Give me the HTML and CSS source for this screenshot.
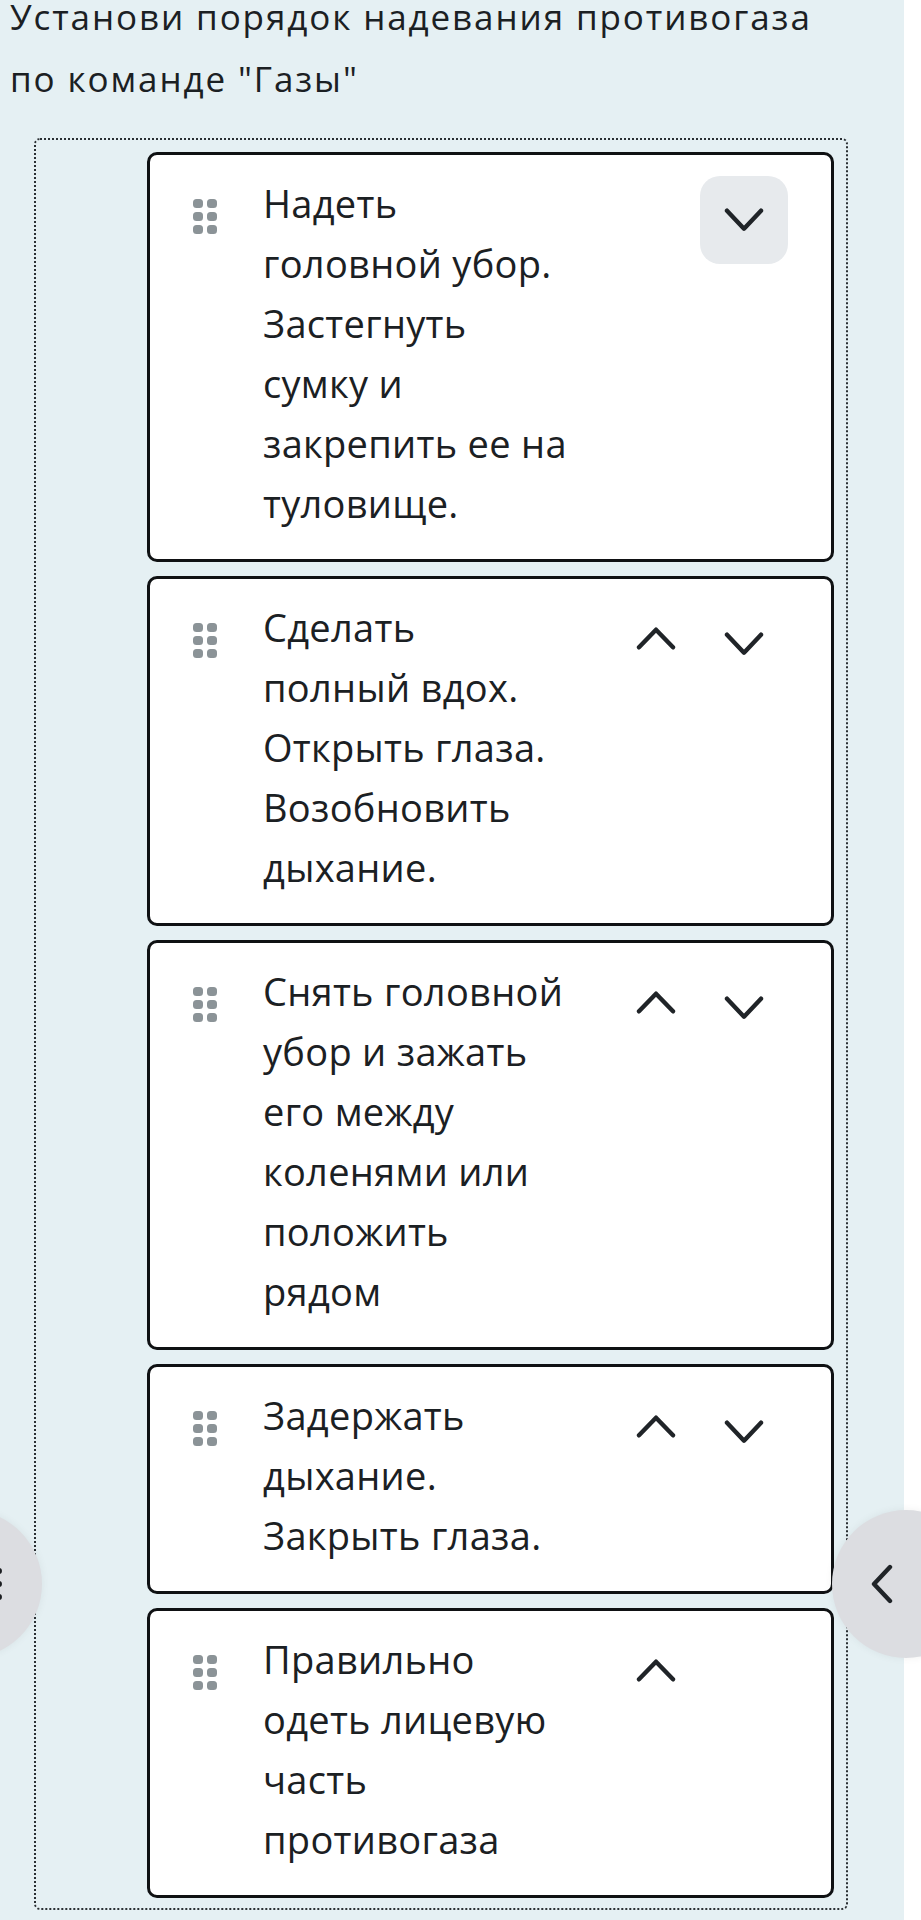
FILE: index.html
```html
<!DOCTYPE html>
<html lang="ru">
<head>
    <meta charset="UTF-8">
    <meta name="viewport" content="width=device-width, initial-scale=1.0">
    <title>Порядок надевания противогаза</title>
    <link rel="stylesheet" href="styles.css">
</head>
<body>
    <main class="screen">
        <h1 class="task-title">Установи порядок надевания противогаза по команде "Газы"</h1>

        <!-- список для сортировки -->
        <div class="sort-list">
            <div class="sort-item">
                <svg class="grip" viewBox="0 0 24 35"><rect x="0" y="0" width="10" height="9" rx="3.5"/><rect x="14" y="0" width="10" height="9" rx="3.5"/><rect x="0" y="13" width="10" height="9" rx="3.5"/><rect x="14" y="13" width="10" height="9" rx="3.5"/><rect x="0" y="26" width="10" height="9" rx="3.5"/><rect x="14" y="26" width="10" height="9" rx="3.5"/></svg>
                <p class="item-text">Надеть<br>головной убор.<br>Застегнуть<br>сумку и<br>закрепить ее на<br>туловище.</p>
                <div class="item-controls">
                    <button class="move-btn is-hidden"><svg viewBox="0 0 40 40"><path d="M3 23.3 L20 5.7 L37 23.3"/></svg></button>
                    <button class="move-btn is-active"><svg viewBox="0 0 40 40"><path d="M3 10.7 L20 28.7 L37 10.7"/></svg></button>
                </div>
            </div>

            <div class="sort-item">
                <svg class="grip" viewBox="0 0 24 35"><rect x="0" y="0" width="10" height="9" rx="3.5"/><rect x="14" y="0" width="10" height="9" rx="3.5"/><rect x="0" y="13" width="10" height="9" rx="3.5"/><rect x="14" y="13" width="10" height="9" rx="3.5"/><rect x="0" y="26" width="10" height="9" rx="3.5"/><rect x="14" y="26" width="10" height="9" rx="3.5"/></svg>
                <p class="item-text">Сделать<br>полный вдох.<br>Открыть глаза.<br>Возобновить<br>дыхание.</p>
                <div class="item-controls">
                    <button class="move-btn"><svg viewBox="0 0 40 40"><path d="M3 23.3 L20 5.7 L37 23.3"/></svg></button>
                    <button class="move-btn"><svg viewBox="0 0 40 40"><path d="M3 10.7 L20 28.7 L37 10.7"/></svg></button>
                </div>
            </div>

            <div class="sort-item">
                <svg class="grip" viewBox="0 0 24 35"><rect x="0" y="0" width="10" height="9" rx="3.5"/><rect x="14" y="0" width="10" height="9" rx="3.5"/><rect x="0" y="13" width="10" height="9" rx="3.5"/><rect x="14" y="13" width="10" height="9" rx="3.5"/><rect x="0" y="26" width="10" height="9" rx="3.5"/><rect x="14" y="26" width="10" height="9" rx="3.5"/></svg>
                <p class="item-text">Снять головной<br>убор и зажать<br>его между<br>коленями или<br>положить<br>рядом</p>
                <div class="item-controls">
                    <button class="move-btn"><svg viewBox="0 0 40 40"><path d="M3 23.3 L20 5.7 L37 23.3"/></svg></button>
                    <button class="move-btn"><svg viewBox="0 0 40 40"><path d="M3 10.7 L20 28.7 L37 10.7"/></svg></button>
                </div>
            </div>

            <div class="sort-item">
                <svg class="grip" viewBox="0 0 24 35"><rect x="0" y="0" width="10" height="9" rx="3.5"/><rect x="14" y="0" width="10" height="9" rx="3.5"/><rect x="0" y="13" width="10" height="9" rx="3.5"/><rect x="14" y="13" width="10" height="9" rx="3.5"/><rect x="0" y="26" width="10" height="9" rx="3.5"/><rect x="14" y="26" width="10" height="9" rx="3.5"/></svg>
                <p class="item-text">Задержать<br>дыхание.<br>Закрыть глаза.</p>
                <div class="item-controls">
                    <button class="move-btn"><svg viewBox="0 0 40 40"><path d="M3 23.3 L20 5.7 L37 23.3"/></svg></button>
                    <button class="move-btn"><svg viewBox="0 0 40 40"><path d="M3 10.7 L20 28.7 L37 10.7"/></svg></button>
                </div>
            </div>

            <div class="sort-item">
                <svg class="grip" viewBox="0 0 24 35"><rect x="0" y="0" width="10" height="9" rx="3.5"/><rect x="14" y="0" width="10" height="9" rx="3.5"/><rect x="0" y="13" width="10" height="9" rx="3.5"/><rect x="14" y="13" width="10" height="9" rx="3.5"/><rect x="0" y="26" width="10" height="9" rx="3.5"/><rect x="14" y="26" width="10" height="9" rx="3.5"/></svg>
                <p class="item-text">Правильно<br>одеть лицевую<br>часть<br>противогаза</p>
                <div class="item-controls">
                    <button class="move-btn"><svg viewBox="0 0 40 40"><path d="M3 23.3 L20 5.7 L37 23.3"/></svg></button>
                    <button class="move-btn is-hidden"><svg viewBox="0 0 40 40"><path d="M3 10.7 L20 28.7 L37 10.7"/></svg></button>
                </div>
            </div>
        </div>
    </main>

    <!-- боковые кнопки -->
    <button class="side-btn side-btn-left"><span class="dots"><i></i><i></i><i></i></span></button>
    <button class="side-btn side-btn-right"><svg viewBox="0 0 24 40"><path d="M20 3 L4 20 L20 37"/></svg></button>
</body>
</html>
```

FILE: styles.css
```css
:root {
    --bg-color: #e5f0f3;
    --text-color: #1b2023;
    --grip-color: #8b9397;
}

html, body {
    margin: 0;
    overflow: hidden;
}

body {
    position: relative;
    background: #ffffff;
    font-family: 'Open Sans', 'Noto Sans', sans-serif;
    color: var(--text-color);
}

.screen {
    width: 904px;
    min-height: 1920px;
    background: var(--bg-color);
    padding-top: 1px;
    box-sizing: border-box;
}

/* заголовок задания */
.task-title {
    margin: -15px 0 0;
    padding: 0 50px 0 10px;
    font-size: 35px;
    line-height: 62px;
    letter-spacing: 1.9px;
    font-weight: 400;
}

/* пунктирная рамка списка */
.sort-list {
    width: 814px;
    margin: 28px 0 0 34px;
    padding: 12px 12px 10px 111px;
    box-sizing: border-box;
    border: 2px dotted #2a2f33;
    border-radius: 6px;
    display: flex;
    flex-direction: column;
    gap: 14px;
}

.sort-item {
    display: flex;
    align-items: flex-start;
    padding: 18px 43px 26px 43px;
    background: #ffffff;
    border: 3px solid #0f1113;
    border-radius: 10px;
}

.grip {
    width: 24px;
    height: 35px;
    margin-top: 26px;
    flex-shrink: 0;
    fill: var(--grip-color);
}

.item-text {
    flex: 1;
    margin: 0 0 0 46px;
    font-size: 38px;
    line-height: 60px;
    letter-spacing: 0.3px;
    white-space: nowrap;
}

.item-controls {
    display: flex;
    margin-top: 3px;
}

.move-btn {
    width: 88px;
    height: 88px;
    padding: 0;
    border: none;
    border-radius: 20px;
    background: transparent;
    display: flex;
    justify-content: center;
    align-items: center;
    cursor: pointer;
}

.move-btn svg {
    width: 40px;
    height: 40px;
    fill: none;
    stroke: #202428;
    stroke-width: 4.4;
    stroke-linecap: round;
    stroke-linejoin: round;
}

.move-btn.is-active {
    background: #e7eaed;
}

.move-btn.is-hidden {
    visibility: hidden;
}

/* круглые кнопки по краям */
.side-btn {
    position: absolute;
    top: 1510px;
    width: 148px;
    height: 148px;
    padding: 0;
    border: none;
    border-radius: 50%;
    background: #dcdde1;
    box-shadow: 0 0 8px rgba(0,0,0,0.06);
    display: flex;
    align-items: center;
}

.side-btn-left {
    left: -106px;
    justify-content: flex-end;
    padding-right: 40px;
    box-sizing: border-box;
}

.side-btn-left .dots {
    display: flex;
    flex-direction: column;
    gap: 7px;
}

.side-btn-left .dots i {
    display: block;
    width: 6px;
    height: 6px;
    border-radius: 50%;
    background: #1b1d20;
}

.side-btn-right {
    left: 832px;
    padding-left: 38px;
    box-sizing: border-box;
}

.side-btn-right svg {
    width: 24px;
    height: 40px;
    fill: none;
    stroke: #202428;
    stroke-width: 4.4;
    stroke-linecap: round;
    stroke-linejoin: round;
}
```
